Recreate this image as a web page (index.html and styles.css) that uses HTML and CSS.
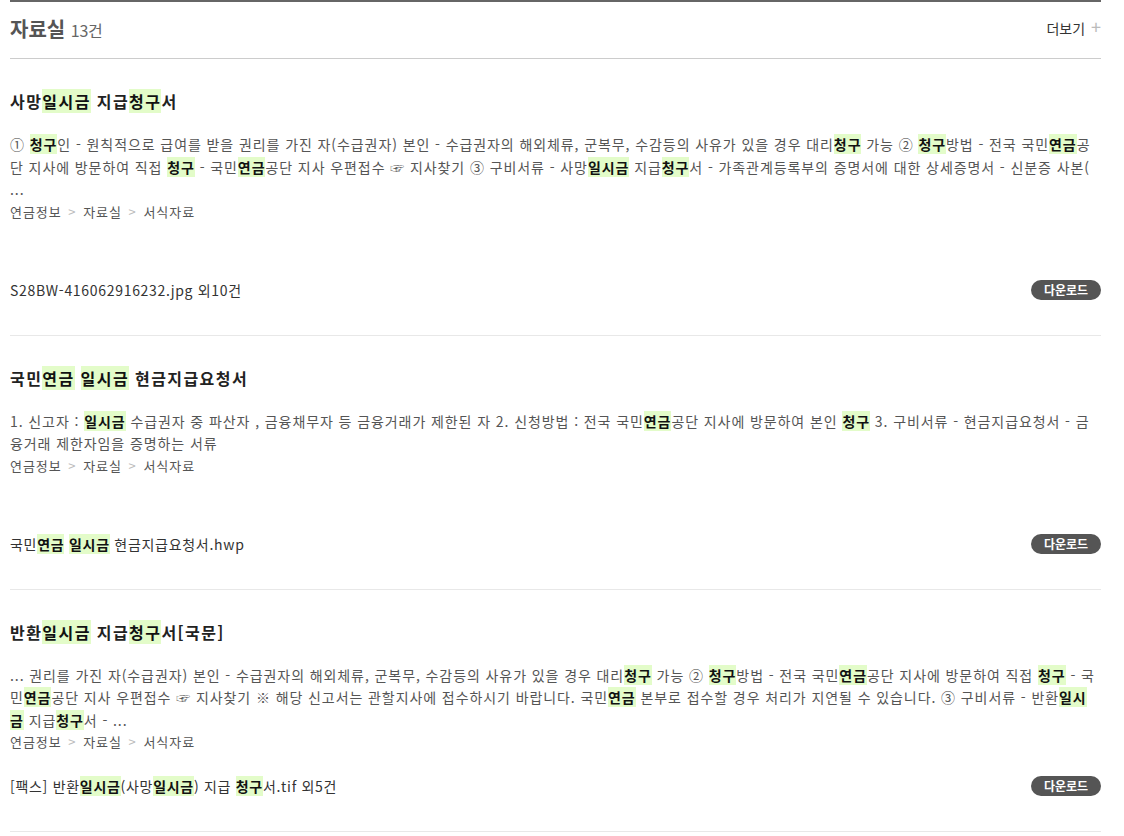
FILE: index.html
```html
<!DOCTYPE html>
<html lang="ko">
<head>
<meta charset="utf-8">
<title>자료실</title>
<link rel="stylesheet" href="styles.css">
</head>
<body>
<div class="board">
  <div class="board-head">
    <h2 class="board-title">자료실 <span class="count">13건</span></h2>
    <a class="more" href="#">더보기 <span class="plus">+</span></a>
  </div>

  <div class="item">
    <h3 class="item-title">사망<em>일시금</em> 지급<em>청구</em>서</h3>
    <p class="desc">① <em>청구</em>인 - 원칙적으로 급여를 받을 권리를 가진 자(수급권자) 본인 - 수급권자의 해외체류, 군복무, 수감등의 사유가 있을 경우 대리<em>청구</em> 가능 ② <em>청구</em>방법 - 전국 국민<em>연금</em>공단 지사에 방문하여 직접 <em>청구</em> - 국민<em>연금</em>공단 지사 우편접수 ☞ 지사찾기 ③ 구비서류 - 사망<em>일시금</em> 지급<em>청구</em>서 - 가족관계등록부의 증명서에 대한 상세증명서 - 신분증 사본(<br>...</p>
    <div class="path">연금정보 <span class="gt">&gt;</span> 자료실 <span class="gt">&gt;</span> 서식자료</div>
    <div class="spacer"></div>
    <div class="file-row">
      <span class="file">S28BW-416062916232.jpg 외10건</span>
      <a class="btn" href="#">다운로드</a>
    </div>
  </div>

  <div class="item">
    <h3 class="item-title">국민<em>연금</em> <em>일시금</em> 현금지급요청서</h3>
    <p class="desc">1. 신고자 : <em>일시금</em> 수급권자 중 파산자 , 금융채무자 등 금융거래가 제한된 자 2. 신청방법 : 전국 국민<em>연금</em>공단 지사에 방문하여 본인 <em>청구</em> 3. 구비서류 - 현금지급요청서 - 금융거래 제한자임을 증명하는 서류</p>
    <div class="path">연금정보 <span class="gt">&gt;</span> 자료실 <span class="gt">&gt;</span> 서식자료</div>
    <div class="spacer"></div>
    <div class="file-row">
      <span class="file">국민<em>연금</em> <em>일시금</em> 현금지급요청서.hwp</span>
      <a class="btn" href="#">다운로드</a>
    </div>
  </div>

  <div class="item">
    <h3 class="item-title">반환<em>일시금</em> 지급<em>청구</em>서[국문]</h3>
    <p class="desc">... 권리를 가진 자(수급권자) 본인 - 수급권자의 해외체류, 군복무, 수감등의 사유가 있을 경우 대리<em>청구</em> 가능 ② <em>청구</em>방법 - 전국 국민<em>연금</em>공단 지사에 방문하여 직접 <em>청구</em> - 국민<em>연금</em>공단 지사 우편접수 ☞ 지사찾기 ※ 해당 신고서는 관할지사에 접수하시기 바랍니다. 국민<em>연금</em> 본부로 접수할 경우 처리가 지연될 수 있습니다. ③ 구비서류 - 반환<em>일시<br>금</em> 지급<em>청구</em>서 - ...</p>
    <div class="path">연금정보 <span class="gt">&gt;</span> 자료실 <span class="gt">&gt;</span> 서식자료</div>
    <div class="file-row">
      <span class="file">[팩스] 반환<em>일시금</em>(사망<em>일시금</em>) 지급 <em>청구</em>서.tif 외5건</span>
      <a class="btn" href="#">다운로드</a>
    </div>
  </div>
</div>
</body>
</html>
```

FILE: styles.css
```css
html, body {
  margin: 0;
  padding: 0;
  background: #fff;
}
body {
  font-family: "Noto Sans CJK KR", "Noto Sans", sans-serif;
  color: #555;
}
.board {
  width: 1091px;
  margin-left: 10px;
  border-top: 2px solid #666;
}
.board-head {
  box-sizing: border-box;
  height: 57px;
  padding-bottom: 4px;
  display: flex;
  align-items: center;
  justify-content: space-between;
  border-bottom: 1px solid #ccc;
}
.board-title {
  margin: 0;
  font-size: 20px;
  font-weight: 700;
  color: #555;
}
.count {
  font-size: 16px;
  font-weight: 400;
  color: #666;
  letter-spacing: -0.3px;
}
.more {
  font-size: 14px;
  color: #333;
  text-decoration: none;
  margin-top: -5px;
}
.plus {
  color: #bbb;
  font-size: 18px;
  margin-left: 2px;
}
.item {
  padding-top: 30px;
  padding-bottom: 34px;
  border-bottom: 1px solid #e8e8e8;
}
.item-title {
  margin: 0;
  font-size: 16px;
  line-height: 24px;
  font-weight: 700;
  color: #222;
  letter-spacing: 0.09em;
}
em {
  font-style: normal;
  background: #e3fcc9;
  font-weight: 700;
  color: #111;
}
.desc {
  margin: 20px 0 0;
  font-size: 14px;
  line-height: 22.5px;
  color: #555;
  letter-spacing: 0.065em;
}
.path {
  font-size: 13px;
  line-height: 22px;
  color: #555;
  letter-spacing: 0.075em;
}
.gt {
  color: #bbb;
  margin: 0 2px;
}
.spacer {
  height: 34px;
}
.file-row {
  margin-top: 22px;
  display: flex;
  align-items: center;
  justify-content: space-between;
  height: 22px;
}
.file {
  font-size: 14px;
  color: #333;
  letter-spacing: 0.05em;
}
.btn {
  display: inline-block;
  width: 70px;
  height: 20px;
  line-height: 20px;
  border-radius: 10px;
  background: #555;
  color: #fff;
  font-size: 12px;
  font-weight: 700;
  text-align: center;
  text-decoration: none;
}
```
